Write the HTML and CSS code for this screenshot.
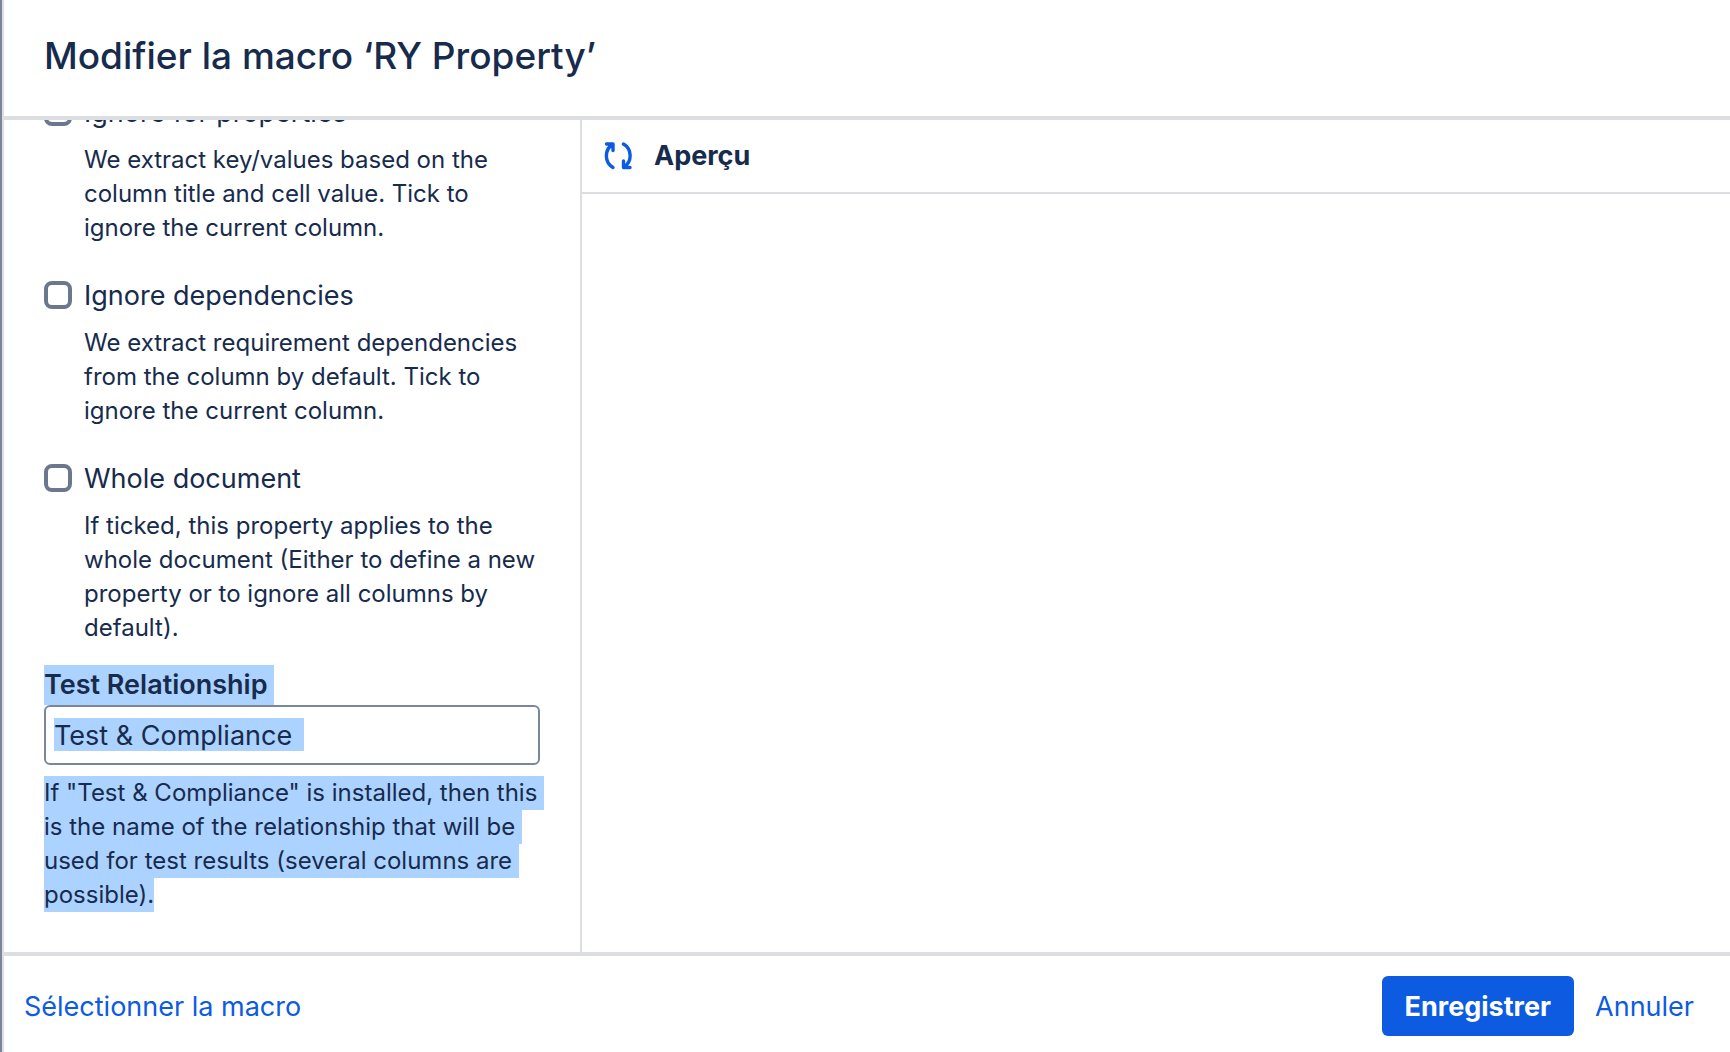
FILE: index.html
```html
<!DOCTYPE html>
<html lang="fr">
<head>
<meta charset="utf-8">
<meta name="viewport" content="width=device-width, initial-scale=1">
<title>Modifier la macro</title>
<link rel="stylesheet" href="styles.css">
</head>
<body>
<div class="dialog">
  <header class="dialog-header">
    <h1 class="dialog-title">Modifier la macro ‘RY Property’</h1>
  </header>
  <main class="dialog-body">
    <form class="params">
      <div class="param">
        <label class="check-row"><input class="check" type="checkbox"><span>Ignore for properties</span></label>
        <p class="help help-indent">We extract key/values based on the column title and cell value. Tick to ignore the current column.</p>
      </div>
      <div class="param">
        <label class="check-row"><input class="check" type="checkbox"><span>Ignore dependencies</span></label>
        <p class="help help-indent">We extract requirement dependencies from the column by default. Tick to ignore the current column.</p>
      </div>
      <div class="param param-last">
        <label class="check-row"><input class="check" type="checkbox"><span>Whole document</span></label>
        <p class="help help-indent">If ticked, this property applies to the whole document (Either to define a new property or to ignore all columns by default).</p>
      </div>
      <div class="param-text">
        <label class="field-label marked" for="relationship">Test Relationship </label>
        <input class="field" id="relationship" type="text" value="Test &amp; Compliance">
        <p class="help"><span class="marked">If "Test &amp; Compliance" is installed, then this </span><span class="marked">is the name of the relationship that will be </span><span class="marked">used for test results (several columns are </span><span class="marked">possible).</span></p>
      </div>
    </form>
    <section class="preview">
      <div class="preview-header">
        <button class="refresh" type="button" aria-label="Actualiser">
          <svg width="28" height="28" viewBox="0 0 28 28" fill="none" stroke="currentColor" stroke-width="3.4" stroke-linecap="round" stroke-linejoin="round">
            <path d="M2.500 2H9V8.500M8.500 2.500C0 8 .500 20.500 9 25.500"/>
            <path d="M26 25.500H19.500V19M20 25C28.500 19.500 28 7 19.500 2"/>
          </svg>
        </button>
        <h2 class="preview-title">Aperçu</h2>
      </div>
    </section>
  </main>
  <footer class="dialog-footer">
    <a class="link" href="#">Sélectionner la macro</a>
    <div class="actions">
      <button class="primary" type="button">Enregistrer</button>
      <a class="link" href="#">Annuler</a>
    </div>
  </footer>
</div>
</body>
</html>
```
FILE: styles.css
```css
* { box-sizing: border-box; }

body {
  margin: 0;
  background: #fff;
  color: #172b4d;
  font-family: Inter, "Liberation Sans", sans-serif;
  font-size: 27px;
}

h1, h2, p { margin: 0; }

.dialog {
  display: flex;
  flex-direction: column;
  height: 100vh;
  overflow: hidden;
  border-left: 2px solid #7a849a;
  box-shadow: inset 2px 0 #dcdfe6;
}

.dialog-header {
  flex: none;
  margin-left: 2px;
  padding: 32px 40px 36px;
  border-bottom: 4px solid #dddee1;
}

.dialog-title {
  font-size: 37px;
  font-weight: 500;
  line-height: 48px;
}

.dialog-body {
  flex: 1;
  display: flex;
  min-height: 0;
  margin-left: 2px;
}

.params {
  flex: none;
  display: flex;
  flex-direction: column;
  justify-content: flex-end;
  width: 578px;
  padding: 0 40px;
  padding-bottom: 40px;
  border-right: 2px solid #dddee1;
  overflow: hidden;
}

.param { flex: none; padding-bottom: 30px; }
.param-last { padding-bottom: 20px; }
.param-text { flex: none; }

.check-row {
  display: flex;
  align-items: center;
  gap: 12px;
  height: 40px;
}

.check {
  appearance: none;
  width: 28px;
  height: 28px;
  margin: 0;
  border: 4px solid #6b778c;
  border-radius: 8px;
  background: #fff;
}

.help {
  font-size: 24px;
  line-height: 34px;
}

.help-indent { padding: 11px 0 0 40px; }

.marked {
  display: block;
  width: fit-content;
  background: #acd2ff;
  white-space: pre;
}

.field-label {
  font-weight: 600;
  line-height: 40px;
}

.field {
  display: block;
  width: 100%;
  height: 60px;
  margin-bottom: 11px;
  padding: 0 8px;
  border: 2px solid #7a869a;
  border-radius: 6px;
  background: linear-gradient(#acd2ff, #acd2ff) 8px 11px / 250px 33px no-repeat #fff;
  color: inherit;
  font: inherit;
}

.preview { flex: 1; }

.preview-header {
  display: flex;
  align-items: center;
  gap: 22px;
  height: 74px;
  padding-left: 22px;
  border-bottom: 2px solid #dddee1;
}

.refresh {
  display: flex;
  padding: 0;
  border: 0;
  background: none;
  color: #0c5be0;
}

.preview-title {
  font-size: 27px;
  font-weight: 700;
  line-height: 40px;
}

.dialog-footer {
  flex: none;
  display: flex;
  align-items: center;
  justify-content: space-between;
  margin-left: 2px;
  padding: 20px 36px 16px 20px;
  border-top: 4px solid #dddee1;
}

.actions { display: flex; align-items: center; gap: 21px; }

.link { color: #0c5be0; text-decoration: none; }

.primary {
  height: 60px;
  padding: 0 23px;
  border: 0;
  border-radius: 6px;
  background: #0c5be0;
  color: #fff;
  font: inherit;
  font-weight: 700;
}
```
